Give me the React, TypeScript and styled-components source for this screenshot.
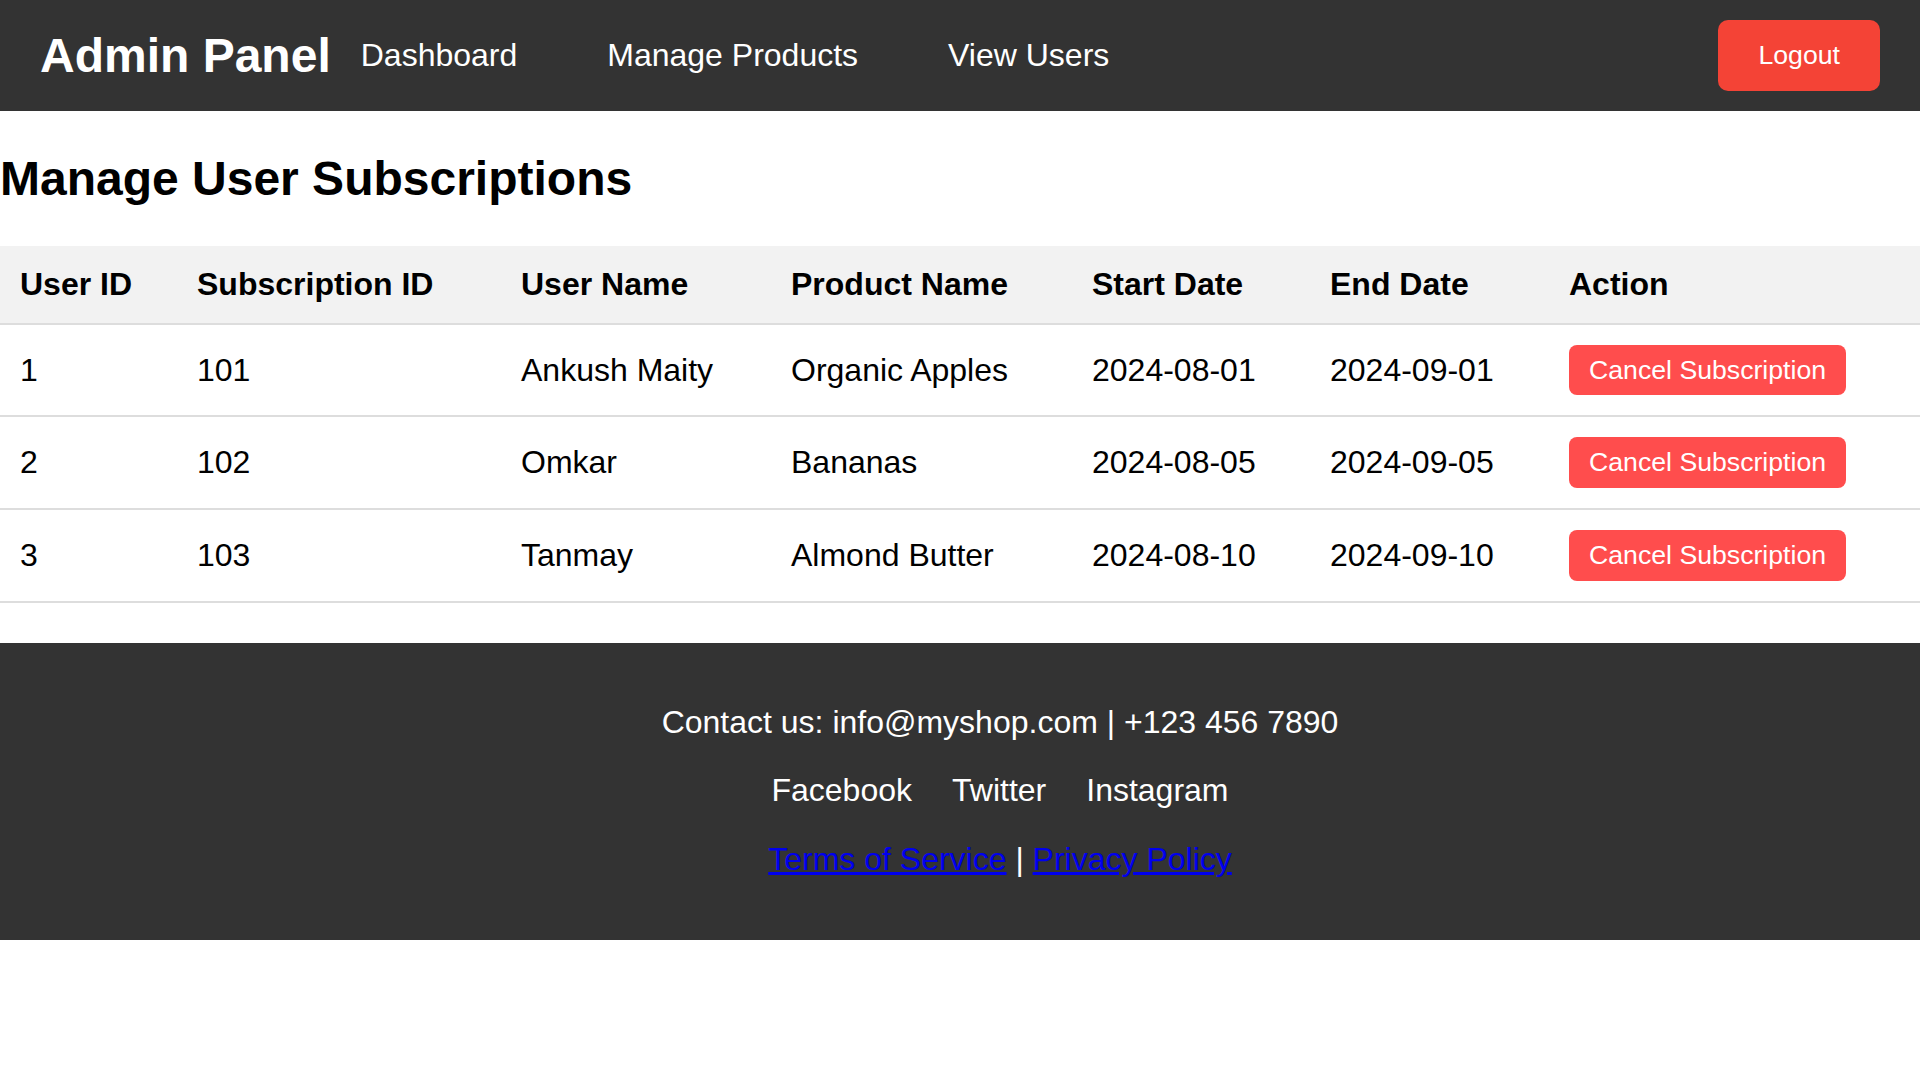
import * as React from "react";
import styled, { createGlobalStyle } from "styled-components";

const GlobalStyle = createGlobalStyle`
  html, body {
    margin: 0;
    padding: 0;
    background: #ffffff;
    font-family: "Liberation Sans", Arial, sans-serif;
    color: #000000;
  }

  ::-webkit-scrollbar {
    height: 15px;
    width: 15px;
    background: #424242;
  }
  ::-webkit-scrollbar-track {
    background: #424242;
  }
  ::-webkit-scrollbar-thumb {
    background: #686868;
    border: 2px solid #424242;
    border-left: none;
    border-right: none;
  }
`;

const Header = styled.header`
  display: flex;
  align-items: center;
  justify-content: space-between;
  background-color: #333333;
  padding: 20px 40px;
`;

const Brand = styled.div`
  display: flex;
  align-items: center;
`;

const Logo = styled.h1`
  margin: 0 30px 0 0;
  font-size: 48px;
  font-weight: bold;
  color: #ffffff;
  line-height: 1.15;
`;

const Nav = styled.nav`
  display: flex;
  align-items: center;
  gap: 90px;
`;

const NavLink = styled.a`
  color: #ffffff;
  text-decoration: none;
  font-size: 32px;
`;

const Button = styled.button<{ $tone: "dark" | "light"; $size: "big" | "small" }>`
  font-family: "Liberation Sans", Arial, sans-serif;
  font-size: 26.67px;
  line-height: 1.15;
  color: #ffffff;
  border: none;
  cursor: pointer;
  background-color: ${(p) => (p.$tone === "dark" ? "#f44336" : "#ff4d4d")};
  padding: ${(p) => (p.$size === "big" ? "20px 40px" : "10px 20px")};
  border-radius: ${(p) => (p.$size === "big" ? "10px" : "8px")};
`;

const Main = styled.main`
  margin: 0;
`;

const Title = styled.h2`
  font-size: 48px;
  font-weight: bold;
  margin: 40px 0;
  line-height: 1.15;
`;

const Table = styled.table`
  width: 100%;
  border-collapse: collapse;
  font-size: 32px;
`;

const HeadCell = styled.th<{ $w: number }>`
  width: ${(p) => p.$w}px;
  text-align: left;
  padding: 20px;
  background-color: #f2f2f2;
  border-bottom: 2px solid #dddddd;
  font-weight: bold;
  line-height: 1.15;
  white-space: nowrap;
`;

const Cell = styled.td`
  text-align: left;
  padding: 20px;
  border-bottom: 2px solid #dddddd;
  line-height: 1.15;
  white-space: nowrap;
`;

const Footer = styled.footer`
  width: 100%;
  margin-top: 40px;
  padding: 29px 40px 30px;
  background-color: #333333;
  color: #ffffff;
  text-align: center;
  font-size: 32px;
`;

const FooterLine = styled.p`
  margin: 32px 0;
  line-height: 1.15;
`;

const Socials = styled.div`
  display: flex;
  justify-content: center;
  gap: 40px;
  margin: 32px 0;
  line-height: 1.15;
`;

const SocialLink = styled.a`
  color: #ffffff;
  text-decoration: none;
`;

const PolicyLink = styled.a`
  color: #0000ee;
  text-decoration: underline;
`;

// content widths (cell padding of 20px each side comes on top)
const columns = [
  { label: "User ID", w: 137 },
  { label: "Subscription ID", w: 284 },
  { label: "User Name", w: 230 },
  { label: "Product Name", w: 261 },
  { label: "Start Date", w: 198 },
  { label: "End Date", w: 199 },
  { label: "Action", w: 331 },
];

const subscriptions = [
  { userId: 1, subId: 101, user: "Ankush Maity", product: "Organic Apples", start: "2024-08-01", end: "2024-09-01" },
  { userId: 2, subId: 102, user: "Omkar", product: "Bananas", start: "2024-08-05", end: "2024-09-05" },
  { userId: 3, subId: 103, user: "Tanmay", product: "Almond Butter", start: "2024-08-10", end: "2024-09-10" },
];

export default function App() {
  return (
    <>
      <GlobalStyle />
      <Header>
        <Brand>
          <Logo>Admin Panel</Logo>
          <Nav>
            <NavLink href="#">Dashboard</NavLink>
            <NavLink href="#">Manage Products</NavLink>
            <NavLink href="#">View Users</NavLink>
          </Nav>
        </Brand>
        <Button $tone="dark" $size="big">Logout</Button>
      </Header>

      <Main>
        <Title>Manage User Subscriptions</Title>
        <Table>
          <thead>
            <tr>
              {columns.map((c) => (
                <HeadCell key={c.label} $w={c.w}>{c.label}</HeadCell>
              ))}
            </tr>
          </thead>
          <tbody>
            {subscriptions.map((s) => (
              <tr key={s.subId}>
                <Cell>{s.userId}</Cell>
                <Cell>{s.subId}</Cell>
                <Cell>{s.user}</Cell>
                <Cell>{s.product}</Cell>
                <Cell>{s.start}</Cell>
                <Cell>{s.end}</Cell>
                <Cell>
                  <Button $tone="light" $size="small">Cancel Subscription</Button>
                </Cell>
              </tr>
            ))}
          </tbody>
        </Table>
      </Main>

      <Footer>
        <FooterLine>Contact us: info@myshop.com | +123 456 7890</FooterLine>
        <Socials>
          <SocialLink href="#">Facebook</SocialLink>
          <SocialLink href="#">Twitter</SocialLink>
          <SocialLink href="#">Instagram</SocialLink>
        </Socials>
        <FooterLine>
          <PolicyLink href="#">Terms of Service</PolicyLink> | <PolicyLink href="#">Privacy Policy</PolicyLink>
        </FooterLine>
      </Footer>
    </>
  );
}
